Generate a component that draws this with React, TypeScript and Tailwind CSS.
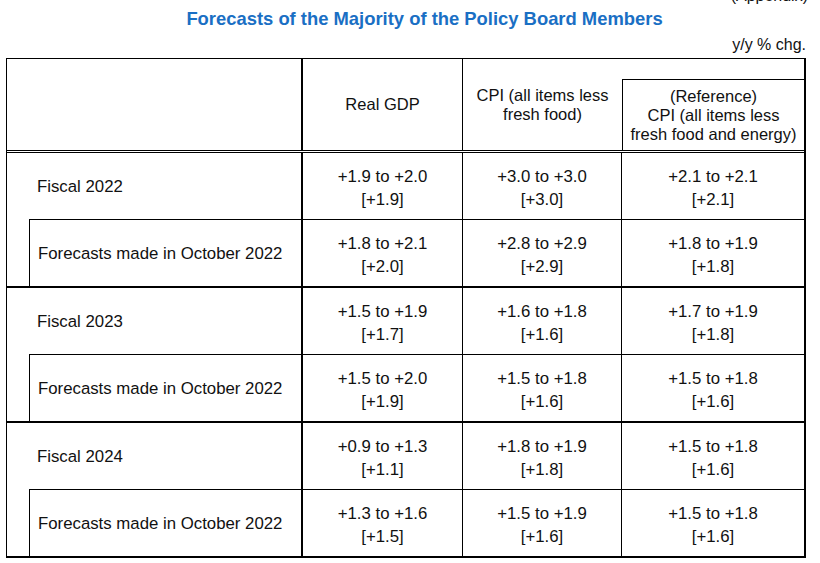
import React from 'react';

type Group = {
  year: string;
  main: string[][];
  prev: string[][];
};

const groups: Group[] = [
  {
    year: 'Fiscal 2022',
    main: [['+1.9 to +2.0', '[+1.9]'], ['+3.0 to +3.0', '[+3.0]'], ['+2.1 to +2.1', '[+2.1]']],
    prev: [['+1.8 to +2.1', '[+2.0]'], ['+2.8 to +2.9', '[+2.9]'], ['+1.8 to +1.9', '[+1.8]']],
  },
  {
    year: 'Fiscal 2023',
    main: [['+1.5 to +1.9', '[+1.7]'], ['+1.6 to +1.8', '[+1.6]'], ['+1.7 to +1.9', '[+1.8]']],
    prev: [['+1.5 to +2.0', '[+1.9]'], ['+1.5 to +1.8', '[+1.6]'], ['+1.5 to +1.8', '[+1.6]']],
  },
  {
    year: 'Fiscal 2024',
    main: [['+0.9 to +1.3', '[+1.1]'], ['+1.8 to +1.9', '[+1.8]'], ['+1.5 to +1.8', '[+1.6]']],
    prev: [['+1.3 to +1.6', '[+1.5]'], ['+1.5 to +1.9', '[+1.6]'], ['+1.5 to +1.8', '[+1.6]']],
  },
];

const DataCells = ({ values, top }: { values: string[][]; top?: boolean }) => (
  <>
    <div className={`w-[160px] pt-[3px] border-r border-black flex flex-col items-center justify-center leading-[23px] ${top ? 'border-t' : ''}`}>
      <span>{values[0][0]}</span>
      <span>{values[0][1]}</span>
    </div>
    <div className={`w-[159px] pt-[3px] border-r border-black flex flex-col items-center justify-center leading-[23px] ${top ? 'border-t' : ''}`}>
      <span>{values[1][0]}</span>
      <span>{values[1][1]}</span>
    </div>
    <div className={`flex-1 pt-[3px] border-black flex flex-col items-center justify-center leading-[23px] ${top ? 'border-t' : ''}`}>
      <span>{values[2][0]}</span>
      <span>{values[2][1]}</span>
    </div>
  </>
);

export default function App() {
  return (
    <div
      className="w-[820px] h-[563px] bg-white overflow-hidden text-[#111]"
      style={{ fontFamily: '"Liberation Sans", Arial, sans-serif' }}
    >
      {/* label cut off at the very top, as in the source */}
      <div className="flex justify-end pr-[12px] h-0">
        <span className="text-[16px] leading-[18px] -mt-[13px]">(Appendix)</span>
      </div>

      <div className="pl-[29px] pt-[8px] text-center text-[18.4px] font-bold leading-[22px] text-[#1a6fc4]">
        Forecasts of the Majority of the Policy Board Members
      </div>

      <div className="flex justify-end pr-[14px] mt-[6px] text-[16px] leading-[18px]">y/y % chg.</div>

      <div className="ml-[6px] mt-[4px] w-[800px] border-t border-l border-r-2 border-black text-[16.8px]">
        {/* header */}
        <div className="flex h-[94px] border-b-[3px] border-double border-black leading-[19px] text-[16.5px]">
          <div className="w-[296px] border-r-2 border-black" />
          <div className="w-[160px] border-r border-black flex items-center justify-center">Real GDP</div>
          <div className="w-[159px] flex flex-col items-center justify-center text-center">
            <span>CPI (all items less</span>
            <span>fresh food)</span>
          </div>
          <div className="flex-1 flex flex-col">
            <div className="h-[20px]" />
            <div className="flex-1 border-l border-t border-black flex flex-col items-center justify-center text-center">
              <span>(Reference)</span>
              <span>CPI (all items less</span>
              <span>fresh food and energy)</span>
            </div>
          </div>
        </div>

        {groups.map((g) => (
          <div key={g.year} className="border-b-2 border-black">
            <div className="flex h-[66px]">
              <div className="w-[296px] pt-[2px] border-r-2 border-black flex items-center pl-[30px]">{g.year}</div>
              <DataCells values={g.main} />
            </div>
            <div className="flex h-[67px]">
              <div className="w-[22px]" />
              <div className="w-[274px] pt-[2px] border-l border-t border-r-2 border-black flex items-center pl-[8px]">
                Forecasts made in October 2022
              </div>
              <DataCells values={g.prev} top />
            </div>
          </div>
        ))}
      </div>
    </div>
  );
}
